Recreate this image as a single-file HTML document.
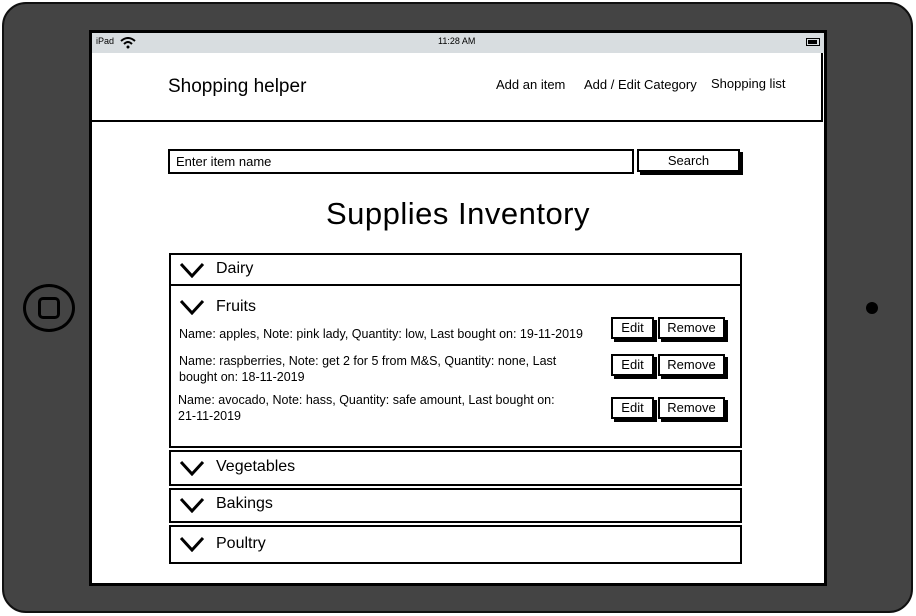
<!DOCTYPE html><html><head><style>
*{margin:0;padding:0;box-sizing:border-box}
body{width:916px;height:616px;background:#fff;position:relative;overflow:hidden;font-family:"Liberation Sans",sans-serif;color:#000}
.a{position:absolute}
.box{position:absolute;border:2px solid #000;background:#fff}
.btn{position:absolute;border:2px solid #000;background:#fff;box-shadow:3px 3px 0 #000;font-size:13px;text-align:center}
.t{position:absolute;font-size:12.5px;line-height:16px}
.hd{position:absolute;font-size:16px}
.chev{position:absolute;width:26px;height:16px}
</style></head><body>
<div class="a" style="left:2px;top:2px;width:911px;height:611px;background:#444;border:2px solid #111;border-radius:24px"></div>
<div class="a" style="left:23px;top:284px;width:52px;height:48px;border:3px solid #000;border-radius:50%"></div>
<div class="a" style="left:38px;top:297px;width:22px;height:22px;border:3px solid #000;border-radius:5px"></div>
<div class="a" style="left:866px;top:302px;width:12px;height:12px;background:#000;border-radius:50%"></div>
<div class="a" style="left:89px;top:30px;width:738px;height:556px;background:#fff;border:3px solid #000"></div>
<div class="a" style="left:92px;top:33px;width:732px;height:20px;background:#d8dde0"></div>
<div class="a" style="left:96px;top:36px;font-size:9px">iPad</div>
<svg class="a" style="left:120px;top:37px" width="16" height="12"><path d="M1 4 Q8 -2 15 4 M4 7 Q8 3 12 7" stroke="#000" stroke-width="2" fill="none"/><circle cx="8" cy="10" r="1.5"/></svg>
<div class="a" style="left:438px;top:36px;font-size:9px">11:28 AM</div>
<div class="a" style="left:806px;top:38px;width:14px;height:8px;border:1px solid #000"><div style="margin:1px;width:9px;height:4px;background:#000"></div></div>
<div class="a" style="left:92px;top:53px;width:731px;height:69px;border-bottom:2px solid #000;border-right:2px solid #000"></div>
<div class="a" style="left:168px;top:76px;font-size:19px">Shopping helper</div>
<div class="a" style="left:496px;top:77px;font-size:13px">Add an item</div>
<div class="a" style="left:584px;top:77px;font-size:13px">Add / Edit Category</div>
<div class="a" style="left:711px;top:76px;font-size:13px">Shopping list</div>
<div class="box" style="left:168px;top:149px;width:466px;height:25px;font-size:13px;padding:3px 6px">Enter item name</div>
<div class="btn" style="left:637px;top:149px;width:103px;height:23px;line-height:19px">Search</div>
<div class="a" style="left:0;width:916px;top:196px;text-align:center;font-size:31px;letter-spacing:0.5px">Supplies Inventory</div>
<div class="box" style="left:169px;top:253px;width:573px;height:33px"></div>
<div class="box" style="left:169px;top:284px;width:573px;height:164px"></div>
<div class="box" style="left:169px;top:450px;width:573px;height:36px"></div>
<div class="box" style="left:169px;top:488px;width:573px;height:35px"></div>
<div class="box" style="left:169px;top:525px;width:573px;height:39px"></div>
<svg class="chev" style="left:179px;top:262px"><path d="M2 2 L13 14 L24 2" stroke="#000" stroke-width="3" fill="none"/></svg>
<div class="hd" style="left:216px;top:260px">Dairy</div>
<svg class="chev" style="left:179px;top:299px"><path d="M2 2 L13 14 L24 2" stroke="#000" stroke-width="3" fill="none"/></svg>
<div class="hd" style="left:216px;top:298px">Fruits</div>
<svg class="chev" style="left:179px;top:460px"><path d="M2 2 L13 14 L24 2" stroke="#000" stroke-width="3" fill="none"/></svg>
<div class="hd" style="left:216px;top:458px">Vegetables</div>
<svg class="chev" style="left:179px;top:497px"><path d="M2 2 L13 14 L24 2" stroke="#000" stroke-width="3" fill="none"/></svg>
<div class="hd" style="left:216px;top:495px">Bakings</div>
<svg class="chev" style="left:179px;top:536px"><path d="M2 2 L13 14 L24 2" stroke="#000" stroke-width="3" fill="none"/></svg>
<div class="hd" style="left:216px;top:535px">Poultry</div>
<div class="t" style="left:179px;top:326px">Name: apples, Note: pink lady, Quantity: low, Last bought on: 19-11-2019</div>
<div class="t" style="left:179px;top:353px;width:395px">Name: raspberries, Note: get 2 for 5 from M&amp;S, Quantity: none, Last bought on: 18-11-2019</div>
<div class="t" style="left:178px;top:392px;width:385px">Name: avocado, Note: hass, Quantity: safe amount, Last bought on: 21-11-2019</div>
<div class="btn" style="left:611px;top:317px;width:43px;height:22px;line-height:18px">Edit</div>
<div class="btn" style="left:658px;top:317px;width:67px;height:22px;line-height:18px">Remove</div>
<div class="btn" style="left:611px;top:354px;width:43px;height:22px;line-height:18px">Edit</div>
<div class="btn" style="left:658px;top:354px;width:67px;height:22px;line-height:18px">Remove</div>
<div class="btn" style="left:611px;top:397px;width:43px;height:22px;line-height:18px">Edit</div>
<div class="btn" style="left:658px;top:397px;width:67px;height:22px;line-height:18px">Remove</div>
</body></html>
